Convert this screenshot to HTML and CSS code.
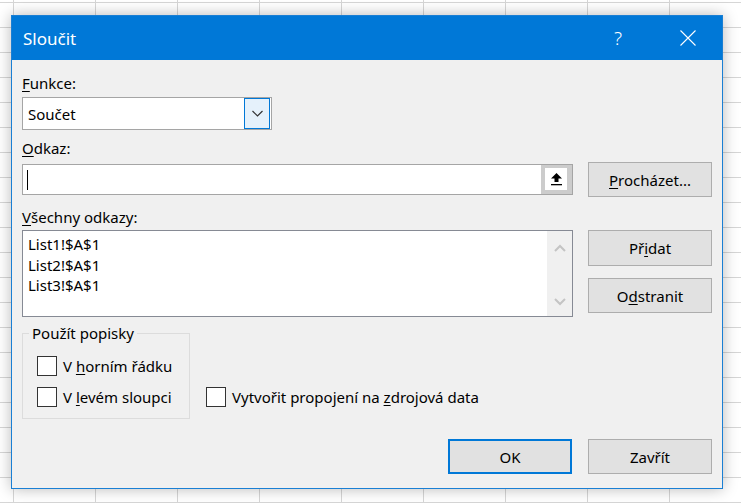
FILE: index.html
```html
<!DOCTYPE html>
<html>
<head>
  <meta charset="utf-8">
  <link rel="stylesheet" href="styles.css">
</head>
<body>
  <div class="dialog">
    <div class="titlebar">
      <div class="title">Sloučit</div>
      <div class="help">?</div>
      <div class="close">
        <svg width="16" height="16" viewBox="0 0 16 16"><path d="M0.5 0.5 L15.5 15.5 M15.5 0.5 L0.5 15.5" stroke="#fff" stroke-width="1.1" fill="none"/></svg>
      </div>
    </div>

    <div class="content">
      <div class="label"><u>F</u>unkce:</div>
      <div class="select">
        <div class="select-text">Součet</div>
        <div class="select-btn">
          <svg width="11" height="7" viewBox="0 0 11 7"><path d="M0.5 1 L5.5 6 L10.5 1" stroke="#333" stroke-width="1.2" fill="none"/></svg>
        </div>
      </div>

      <div class="label gap-top"><u>O</u>dkaz:</div>
      <div class="row ref-row">
        <div class="ref-input">
          <span class="caret"></span>
          <div class="collapse">
            <div class="collapse-inner">
              <svg width="11" height="13" viewBox="0 0 11 13"><path d="M5.5 0 L0 5.5 L3.5 5.5 L3.5 9 L7.5 9 L7.5 5.5 L11 5.5 Z" fill="#000"/><rect x="0" y="11" width="11" height="1.3" fill="#000"/></svg>
            </div>
          </div>
        </div>
        <div class="btn"><span><u>P</u>rocházet...</span></div>
      </div>

      <div class="label refs-label"><u>V</u>šechny odkazy:</div>
      <div class="row list-row">
        <div class="listbox">
          <div class="list-items">
            <div>List1!$A$1</div>
            <div>List2!$A$1</div>
            <div>List3!$A$1</div>
          </div>
          <div class="scrollbar">
            <svg width="12" height="8" viewBox="0 0 12 8"><path d="M1 7 L6 2 L11 7" stroke="#c4c4c4" stroke-width="2" fill="none"/></svg>
            <svg width="12" height="8" viewBox="0 0 12 8"><path d="M1 1 L6 6 L11 1" stroke="#c4c4c4" stroke-width="2" fill="none"/></svg>
          </div>
        </div>
        <div class="btn-col">
          <div class="btn tall"><span>Př<u>i</u>dat</span></div>
          <div class="btn"><span>O<u>d</u>stranit</span></div>
        </div>
      </div>

      <div class="row options">
        <fieldset class="group">
          <legend>Použít popisky</legend>
          <div class="check-row"><span class="check"></span><span>V <u>h</u>orním řádku</span></div>
          <div class="check-row"><span class="check"></span><span>V <u>l</u>evém sloupci</span></div>
        </fieldset>
        <div class="check-row link"><span class="check"></span><span>Vytvořit propojení na <u>z</u>drojová data</span></div>
      </div>

      <div class="row footer">
        <div class="btn default">OK</div>
        <div class="btn">Zavřít</div>
      </div>
    </div>
  </div>
</body>
</html>
```

FILE: styles.css
```css
/* Excel sheet behind the dialog */
body {
  margin: 0;
  width: 741px;
  height: 503px;
  overflow: hidden;
  font-family: "Noto Sans", "Open Sans", sans-serif;
  font-size: 15px;
  color: #000;
  background-color: #fff;
  background-image:
    linear-gradient(to right, #d6d6d6 1px, transparent 1px),
    linear-gradient(to bottom, #d6d6d6 1px, transparent 1px);
  background-size: 82px 25px;
  background-position: 13px 2px;
}

u {
  text-decoration-thickness: 1px;
  text-underline-offset: 2px;
}

.dialog {
  box-sizing: border-box;
  width: 712px;
  height: 474px;
  margin: 15px 0 0 11px;
  background: #f0f0f0;
  border: 1px solid #1a7fd4;
  box-shadow: 0 0 14px rgba(0, 0, 0, 0.28);
}

.titlebar {
  display: flex;
  align-items: center;
  height: 44px;
  background: #0078d7;
  color: #fff;
}

.title {
  flex: 1;
  padding-left: 11px;
  font-size: 17px;
}

.help {
  width: 20px;
  margin-right: 52px;
  text-align: center;
  font-size: 19px;
  font-weight: 300;
}

.close {
  display: flex;
  margin-right: 26px;
}

.content {
  padding: 13px 10px 0 10px;
}

.label {
  height: 20px;
  line-height: 20px;
}

.gap-top {
  margin-top: 8px;
}

.select {
  box-sizing: border-box;
  display: flex;
  align-items: center;
  width: 250px;
  height: 33px;
  margin-top: 4px;
  padding: 1px 1px 1px 0;
  background: #fff;
  border: 1px solid #a5a5a5;
}

.select-text {
  flex: 1;
  padding-left: 5px;
}

.select-btn {
  box-sizing: border-box;
  display: flex;
  align-items: center;
  justify-content: center;
  width: 26px;
  height: 31px;
  background: #e5f1fb;
  border: 1px solid #0078d7;
}

.row {
  display: flex;
  gap: 15px;
}

.ref-row {
  align-items: center;
  margin-top: 4px;
}

.ref-input {
  box-sizing: border-box;
  display: flex;
  align-items: center;
  flex: 1;
  height: 31px;
  padding-left: 4px;
  background: #fff;
  border: 1px solid #a5a5a5;
}

.caret {
  width: 1px;
  height: 20px;
  background: #000;
}

.collapse {
  box-sizing: border-box;
  margin-left: auto;
  width: 31px;
  height: 29px;
  padding: 3px 5px 4px 4px;
  background: #cccccc;
}

.collapse-inner {
  display: flex;
  align-items: center;
  justify-content: center;
  height: 100%;
  background: #fff;
}

.btn {
  box-sizing: border-box;
  display: flex;
  align-items: center;
  justify-content: center;
  flex: none;
  width: 124px;
  height: 35px;
  background: #e1e1e1;
  border: 1px solid #adadad;
}

.refs-label {
  margin-top: 10px;
}

.list-row {
  align-items: flex-start;
  margin-top: 3px;
}

.listbox {
  box-sizing: border-box;
  display: flex;
  flex: 1;
  height: 87px;
  background: #fff;
  border: 1px solid #868a94;
}

.list-items {
  flex: 1;
  padding: 3px 0 0 5px;
  line-height: 20.5px;
}

.scrollbar {
  display: flex;
  flex-direction: column;
  align-items: center;
  justify-content: space-between;
  width: 25px;
  padding: 13px 0 10px;
  background: #f0f0f0;
}

.btn-col {
  display: flex;
  flex-direction: column;
  gap: 12px;
}

.btn.tall {
  height: 36px;
}

.options {
  align-items: flex-end;
  gap: 16px;
  margin-top: 6px;
}

.group {
  box-sizing: border-box;
  width: 168px;
  margin: 0;
  padding: 13px 0 11px 14px;
  border: 1px solid #dcdcdc;
  display: flex;
  flex-direction: column;
  gap: 11px;
}

.group legend {
  margin-left: -8px;
  padding: 0 3px;
  line-height: 20px;
}

.check-row {
  display: flex;
  align-items: center;
  gap: 6px;
  height: 20px;
  white-space: nowrap;
}

.check {
  box-sizing: border-box;
  width: 20px;
  height: 20px;
  background: #fff;
  border: 1px solid #333;
}

.check-row.link {
  margin-bottom: 12px;
}

.footer {
  justify-content: flex-end;
  gap: 16px;
  margin-top: 20px;
}

.btn.default {
  border: 2px solid #0078d7;
}
```
